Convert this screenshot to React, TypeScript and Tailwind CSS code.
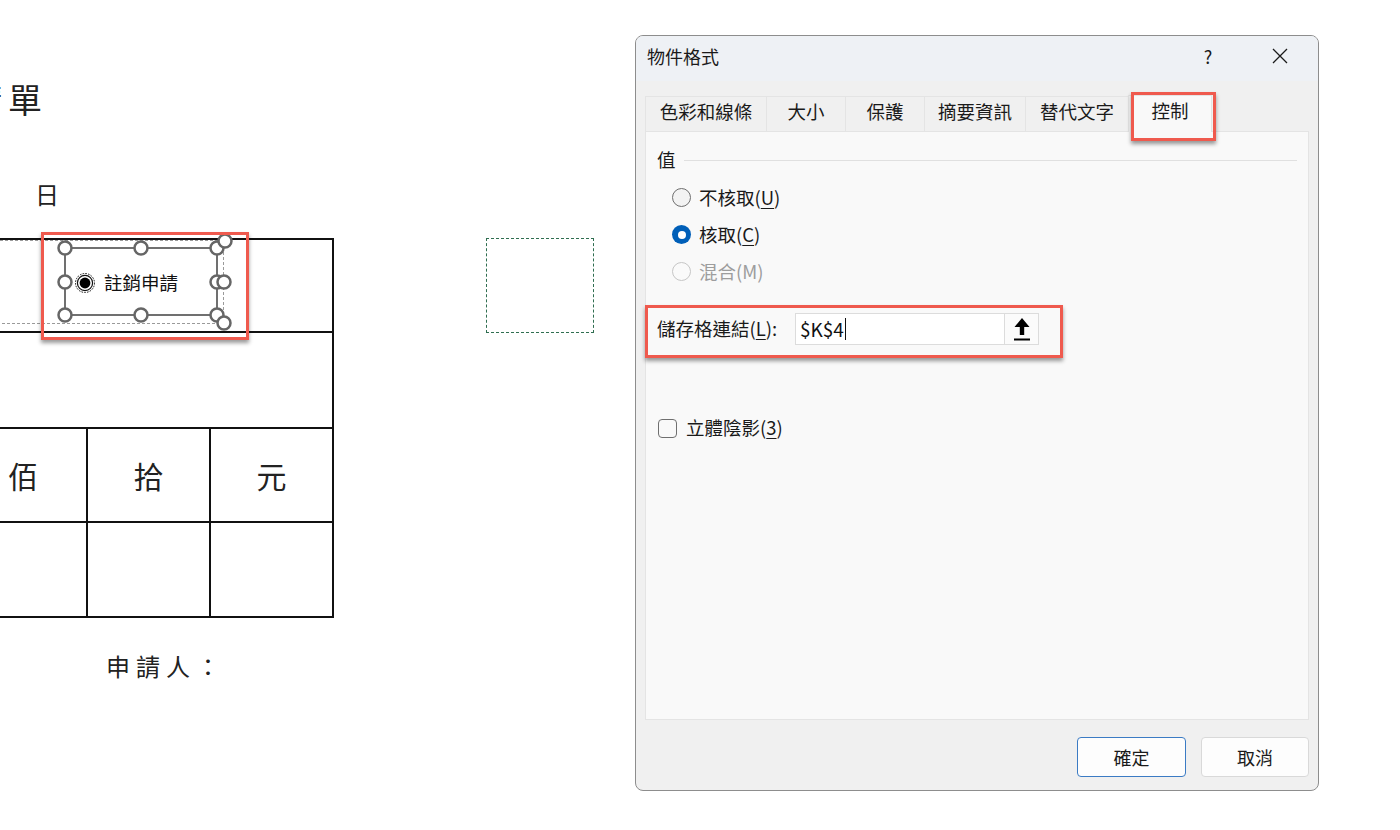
import React from 'react';

const ui = "font-['Noto_Sans_CJK_TC','Noto_Sans',sans-serif]";

const tabs = [
  { label: '色彩和線條', w: 'w-[121px]' },
  { label: '大小', w: 'w-[79px]' },
  { label: '保護', w: 'w-[79px]' },
  { label: '摘要資訊', w: 'w-[101px]' },
  { label: '替代文字', w: 'w-[103px]' },
];

function Key({ k }: { k: string }) {
  return <span className="underline underline-offset-[3px] decoration-1">{k}</span>;
}

function SelectionOverlay() {
  const inner = [
    [65, 23], [141, 23], [217, 23],
    [65, 57], [217, 57],
    [65, 90], [141, 90], [217, 90],
  ];
  const outer = [[225, 16], [224, 57], [224, 98]];
  return (
    <svg className="absolute left-0 top-[225px]" width="260" height="120" viewBox="0 0 260 120">
      <rect x="-5" y="15.5" width="228.5" height="83" fill="none" stroke="#9a9a9a" strokeWidth="1" strokeDasharray="3 2" />
      <rect x="65" y="23" width="152" height="67" fill="none" stroke="#707070" strokeWidth="2" />
      {inner.map(([x, y]) => (
        <circle key={`i${x}-${y}`} cx={x} cy={y} r="6.5" fill="#fff" stroke="#666" strokeWidth="2.5" />
      ))}
      {outer.map(([x, y]) => (
        <circle key={`o${x}-${y}`} cx={x} cy={y} r="6.5" fill="#fff" stroke="#666" strokeWidth="2.5" />
      ))}
      <circle cx="85" cy="58" r="9.5" fill="#fff" stroke="#111" strokeWidth="1" strokeDasharray="1.6 1.2" />
      <circle cx="85" cy="58" r="7.6" fill="#fff" stroke="#111" strokeWidth="1.2" />
      <circle cx="85" cy="58" r="5.4" fill="#000" />
    </svg>
  );
}

function Sheet() {
  const cell = 'flex items-center justify-center text-[30px] text-[#222]';
  return (
    <div className={`relative w-[635px] shrink-0 h-full ${ui}`}>
      <div className="flex flex-col">
        <div className="mt-[79px] -ml-[32px] text-[34px] leading-[40px] tracking-[6px] text-[#222]">請單</div>
        <div className="mt-[59px] ml-[35px] text-[24px] leading-[32px] text-[#222]">日</div>
        <div className="mt-[28px] flex items-start">
          <div className="-ml-[42px] w-[376px] border-2 border-[#111]">
            <div className="h-[93px] border-b-2 border-[#111]" />
            <div className="h-[96px] border-b-2 border-[#111]" />
            <div className="grid grid-cols-[128px_123px_1fr] h-[94px] border-b-2 border-[#111]">
              <div className={`${cell} border-r-2 border-[#111]`}>佰</div>
              <div className={`${cell} border-r-2 border-[#111]`}>拾</div>
              <div className={cell}>元</div>
            </div>
            <div className="grid grid-cols-[128px_123px_1fr] h-[93px]">
              <div className="border-r-2 border-[#111]" />
              <div className="border-r-2 border-[#111]" />
              <div />
            </div>
          </div>
          <div className="ml-[152px] w-[108px] h-[95px] border-[1.5px] border-dashed border-[#2f6e50]" />
        </div>
        <div className="mt-[32px] ml-[106px] text-[24px] leading-[32px] tracking-[6px] text-[#222]">申請人：</div>
      </div>

      <SelectionOverlay />
      <span className="absolute left-[104px] top-[269px] text-[18.5px] leading-[26px] text-[#111]">註銷申請</span>
      <div className="absolute left-[41px] top-[232px] w-[208px] h-[108px] border-[3.5px] border-[#ef5a4e] shadow-[0_3px_4px_rgba(0,0,0,0.4)]" />
    </div>
  );
}

function UpArrow() {
  return (
    <svg width="18" height="26" viewBox="0 0 18 26">
      <path d="M9 2 L1.5 11 L6.8 11 L6.8 19 L11.2 19 L11.2 11 L16.5 11 Z" fill="#000" />
      <rect x="1" y="22.5" width="16" height="2" fill="#000" />
    </svg>
  );
}

function Radio({ state }: { state: 'off' | 'on' | 'disabled' }) {
  if (state === 'on') {
    return (
      <span className="w-[19px] h-[19px] rounded-full bg-[#005fb8] flex items-center justify-center">
        <span className="w-[8px] h-[8px] rounded-full bg-white" />
      </span>
    );
  }
  return (
    <span
      className={`w-[19px] h-[19px] rounded-full border ${state === 'off' ? 'border-[#6f6f6f] bg-[#f3f3f3]' : 'border-[#c6c6c6] bg-[#fafafa]'}`}
    />
  );
}

function Dialog() {
  return (
    <div className={`relative mt-[35px] w-[684px] h-[756px] shrink-0 rounded-[8px] border border-[#8d8d8d] bg-[#f0f0f0] overflow-hidden flex flex-col ${ui}`}>
      <div className="h-[45px] flex items-center bg-[#eef1f5] pl-[11px] pb-[5px]">
        <span className="text-[18px] text-[#1a1a1a]">物件格式</span>
        <div className="ml-auto flex items-center pr-[2px]">
          <span className="w-[72px] text-center text-[18px] text-[#1a1a1a]">?</span>
          <span className="w-[72px] flex justify-center">
            <svg width="18" height="18" viewBox="0 0 18 18">
              <path d="M2 2 L16 16 M16 2 L2 16" stroke="#1a1a1a" strokeWidth="1.3" />
            </svg>
          </span>
        </div>
      </div>

      <div className="px-[9px] flex flex-col flex-1">
        <div className="mt-[13px] flex items-end h-[37px]">
          {tabs.map((t) => (
            <div
              key={t.label}
              className={`${t.w} h-[35px] flex items-center justify-center pb-[4px] border-l border-t border-[#e4e4e4] text-[18.5px] text-[#1a1a1a]`}
            >
              {t.label}
            </div>
          ))}
          <div className="w-[84px] h-[37px] -mb-px z-10 flex items-center justify-center pb-[6px] bg-[#f9f9f9] border-l border-t border-r border-[#e4e4e4] text-[18.5px] text-[#1a1a1a]">
            控制
          </div>
        </div>

        <div className="h-[589px] bg-[#f9f9f9] border border-[#e4e4e4] flex flex-col">
          <div className="mt-[16px] h-[24px] flex items-center pl-[11px] pr-[11px]">
            <span className="text-[18.5px] text-[#1a1a1a]">值</span>
            <span className="ml-[8px] flex-1 h-px bg-[#e0e0e0]" />
          </div>

          <div className="mt-[7px] flex flex-col pl-[26px] text-[18.5px]">
            <div className="h-[37px] flex items-center gap-[8px] text-[#1a1a1a]">
              <Radio state="off" />
              <span>不核取(<Key k="U" />)</span>
            </div>
            <div className="h-[37px] flex items-center gap-[8px] text-[#1a1a1a]">
              <Radio state="on" />
              <span>核取(<Key k="C" />)</span>
            </div>
            <div className="h-[37px] flex items-center gap-[8px] text-[#9d9d9d]">
              <Radio state="disabled" />
              <span>混合(M)</span>
            </div>
          </div>

          <div className="mt-[23px] flex items-center pl-[11px]">
            <span className="w-[138px] text-[18.5px] text-[#1a1a1a]">儲存格連結(<Key k="L" />):</span>
            <div className="w-[244px] h-[32px] bg-white border border-[#dcdcdc] flex items-stretch">
              <div className="flex-1 flex items-center pl-[4px] text-[19px] text-[#111]">
                <span>$K$4</span>
                <span className="ml-px w-px h-[22px] bg-[#111]" />
              </div>
              <div className="w-[34px] bg-[#fbfbfb] border-l border-[#dcdcdc] flex items-center justify-center">
                <UpArrow />
              </div>
            </div>
          </div>

          <div className="mt-[69px] h-[28px] flex items-center pl-[12px] gap-[9px] text-[18.5px] text-[#1a1a1a]">
            <span className="w-[19px] h-[19px] rounded-[4px] border border-[#6f6f6f] bg-[#f9f9f9]" />
            <span>立體陰影(<Key k="3" />)</span>
          </div>
        </div>

        <div className="mt-[17px] flex justify-end gap-[15px]">
          <button className="w-[109px] h-[40px] rounded-[4px] border border-[#3b7bc4] bg-[#fdfdfd] text-[18px] text-[#1a1a1a]">確定</button>
          <button className="w-[108px] h-[40px] rounded-[4px] border border-[#d9d9d9] bg-[#fdfdfd] text-[18px] text-[#1a1a1a]">取消</button>
        </div>
      </div>

      <div className="absolute left-[495px] top-[56px] w-[85px] h-[49px] border-[3.5px] border-[#ef5a4e] shadow-[0_3px_4px_rgba(0,0,0,0.4)] z-20" />
      <div className="absolute left-[9px] top-[269px] w-[418px] h-[53px] border-[3.5px] border-[#ef5a4e] shadow-[0_3px_4px_rgba(0,0,0,0.4)] z-20" />
    </div>
  );
}

export default function App() {
  return (
    <div className="w-[1400px] h-[830px] bg-white overflow-hidden flex">
      <Sheet />
      <Dialog />
    </div>
  );
}
